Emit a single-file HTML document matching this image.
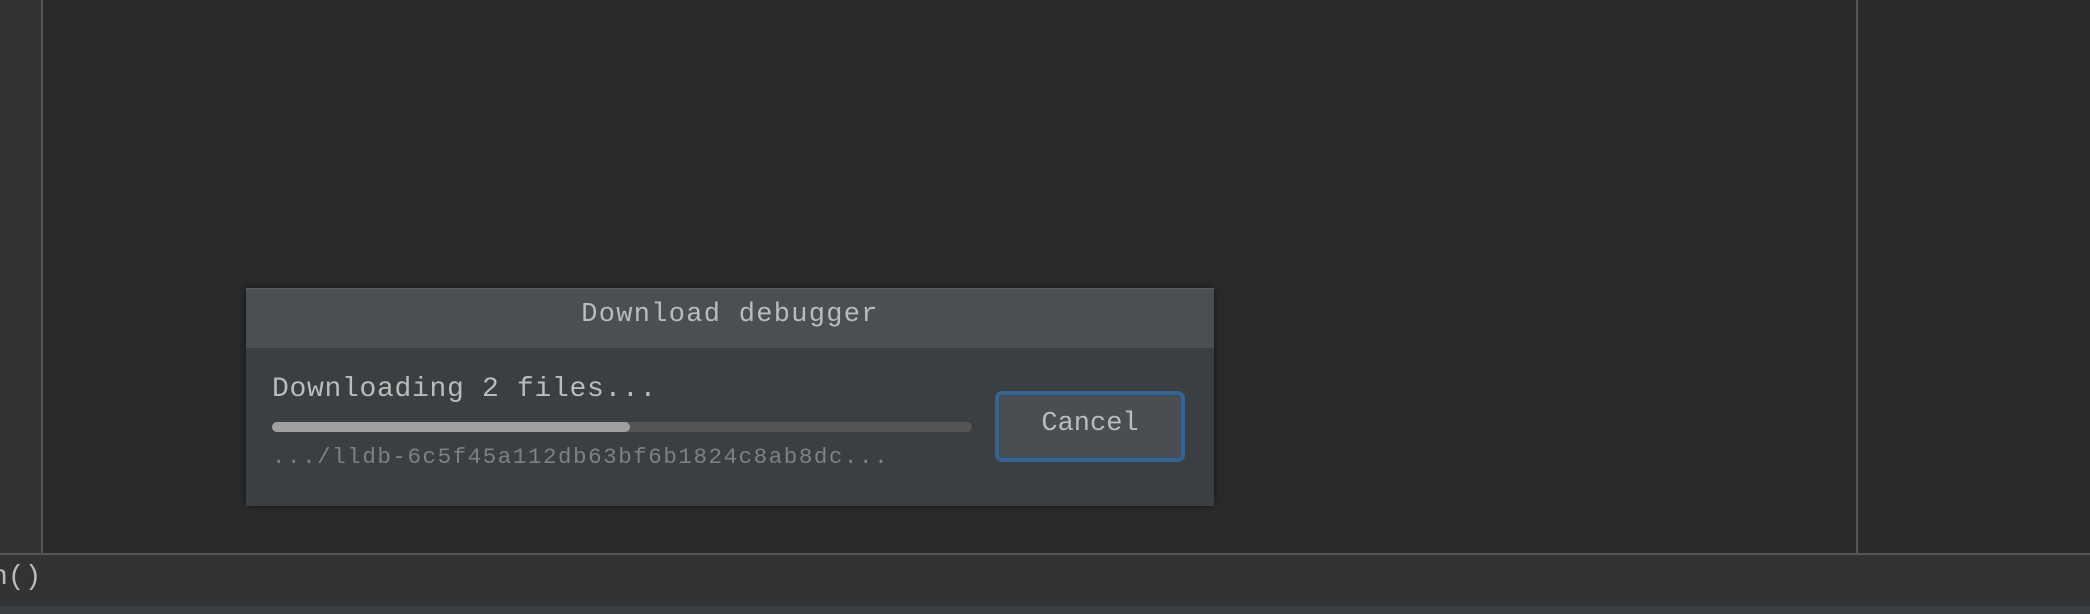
<!DOCTYPE html>
<html><head><style>
body{margin:0;width:2090px;height:614px;background:#2b2b2b;position:relative;overflow:hidden;font-family:"Liberation Mono",monospace}
div{position:absolute;box-sizing:border-box}
</style></head><body>
<div style="left:0;top:0;width:41px;height:554px;background:#313335"></div>
<div style="left:41px;top:0;width:2px;height:554px;background:#555"></div>
<div style="left:1856px;top:0;width:2px;height:554px;background:#555"></div>
<div style="left:0;top:553px;width:2090px;height:2px;background:#555"></div>
<div style="left:0;top:555px;width:2090px;height:51px;background:#313335"></div>
<div style="left:0;top:606px;width:2090px;height:8px;background:#3c3f41"></div>
<div style="left:-9px;top:558px;font-size:28px;color:#bbb;line-height:40px">n()</div>

<div style="left:246px;top:288px;width:968px;height:218px;background:#3c3f41;box-shadow:0 0 8px rgba(0,0,0,.5)"></div>
<div style="left:246px;top:288px;width:968px;height:60px;background:#4b4f52;border-top:1px solid #5a5e61"></div>
<div style="left:246px;top:297px;width:968px;text-align:center;font-size:27px;line-height:36px;color:#bbb;letter-spacing:1.3px">Download debugger</div>
<div style="left:272px;top:372px;font-size:28px;line-height:36px;color:#bbb;letter-spacing:0.7px;white-space:nowrap">Downloading 2 files...</div>
<div style="left:272px;top:422px;width:700px;height:10px;border-radius:5px;background:#555"></div>
<div style="left:272px;top:422px;width:358px;height:10px;border-radius:5px;background:#a0a0a0"></div>
<div style="left:272px;top:442px;font-size:22.5px;line-height:30px;color:#808080;white-space:nowrap;letter-spacing:1.55px">.../lldb-6c5f45a112db63bf6b1824c8ab8dc...</div>
<div style="left:995px;top:391px;width:190px;height:71px;border-radius:7px;border:4px solid #35628f;background:#4b4e51;box-shadow:inset 0 0 0 1px #2f4f70"></div>
<div style="left:995px;top:406px;width:190px;text-align:center;font-size:27px;line-height:36px;color:#bbb">Cancel</div>
</body></html>
